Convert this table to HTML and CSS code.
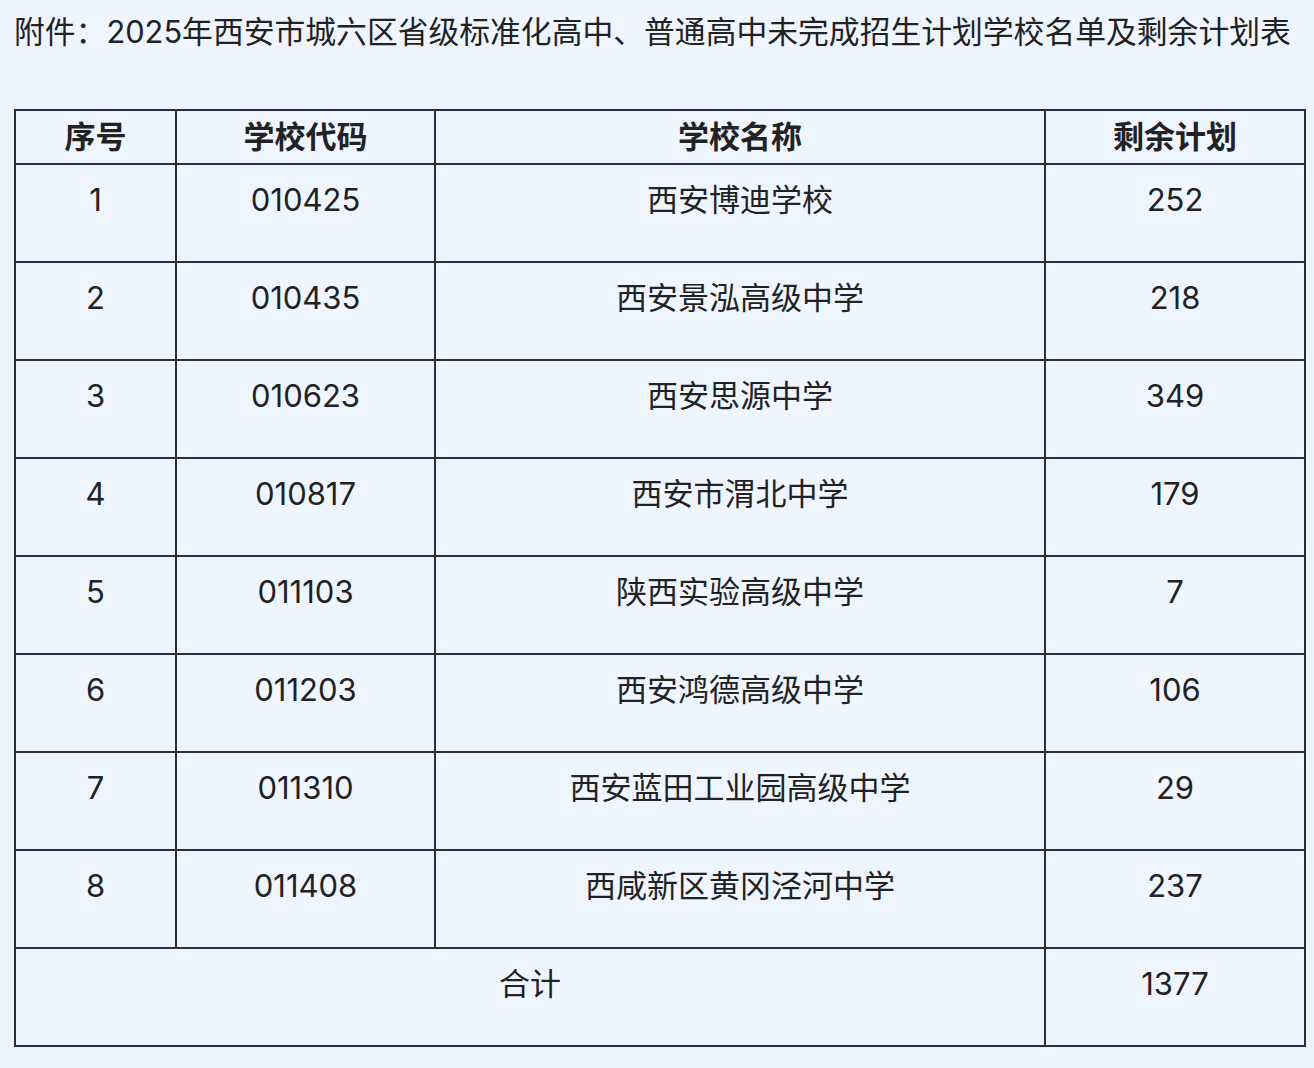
FILE: index.html
```html
<!DOCTYPE html>
<html lang="zh-CN">
<head>
<meta charset="utf-8">
<title>剩余计划表</title>
<link rel="stylesheet" href="styles.css">
</head>
<body>
<div class="page">
  <p class="title">附件：2025年西安市城六区省级标准化高中、普通高中未完成招生计划学校名单及剩余计划表</p>
  <table class="plan">
    <colgroup>
      <col class="c1"><col class="c2"><col class="c3"><col class="c4">
    </colgroup>
    <thead>
      <tr><th>序号</th><th>学校代码</th><th>学校名称</th><th>剩余计划</th></tr>
    </thead>
    <tbody>
      <tr><td>1</td><td>010425</td><td>西安博迪学校</td><td>252</td></tr>
      <tr><td>2</td><td>010435</td><td>西安景泓高级中学</td><td>218</td></tr>
      <tr><td>3</td><td>010623</td><td>西安思源中学</td><td>349</td></tr>
      <tr><td>4</td><td>010817</td><td>西安市渭北中学</td><td>179</td></tr>
      <tr><td>5</td><td>011103</td><td>陕西实验高级中学</td><td>7</td></tr>
      <tr><td>6</td><td>011203</td><td>西安鸿德高级中学</td><td>106</td></tr>
      <tr><td>7</td><td>011310</td><td>西安蓝田工业园高级中学</td><td>29</td></tr>
      <tr><td>8</td><td>011408</td><td>西咸新区黄冈泾河中学</td><td>237</td></tr>
      <tr class="total"><td colspan="3">合计</td><td>1377</td></tr>
    </tbody>
  </table>
</div>
</body>
</html>
```
FILE: styles.css
```css
html, body {
  margin: 0;
  padding: 0;
  background: #eff5ff;
}
body {
  font-family: Inter, "Noto Sans CJK SC", sans-serif;
  color: #222;
  font-size: 31px;
}
.page {
  padding: 9px 10px 0 14px;
}
.title {
  margin: 0;
  line-height: 46px;
  font-size: 30.8px;
  white-space: nowrap;
}
.plan {
  margin-top: 54px;
  width: 1290px;
  border-collapse: collapse;
  table-layout: fixed;
  border: 2px solid #2b2f33;
}
.c1 { width: 161px; }
.c2 { width: 259px; }
.c3 { width: 610px; }
.c4 { width: 260px; }
.plan th, .plan td {
  border: 2px solid #2b2f33;
  text-align: center;
  padding: 0;
  font-size: 31px;
  line-height: 46px;
}
.plan th {
  font-weight: bold;
  height: 52px;
  vertical-align: middle;
}
.plan td {
  height: 98px;
  vertical-align: top;
  padding-top: 12px;
  box-sizing: border-box;
}
```
